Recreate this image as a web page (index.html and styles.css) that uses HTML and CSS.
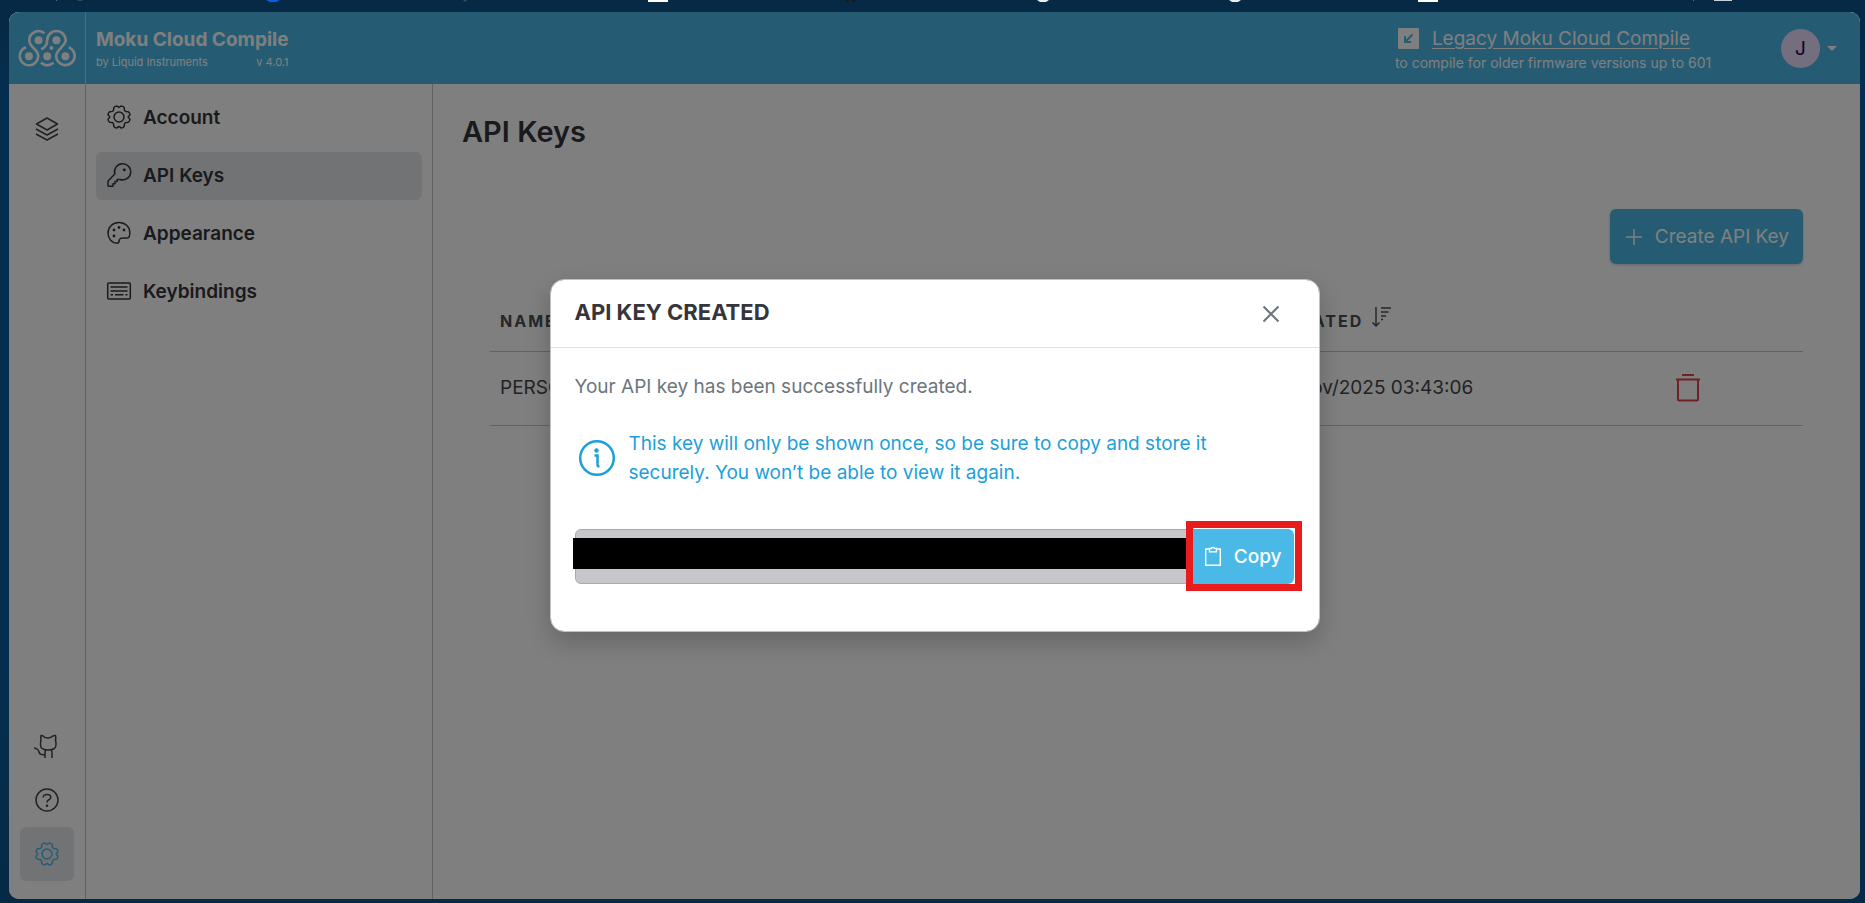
FILE: index.html
```html
<!DOCTYPE html>
<html lang="en">
  <head>
    <meta charset="UTF-8" />
    <meta name="viewport" content="width=device-width, initial-scale=1.0" />
    <title>Moku Cloud Compile</title>
    <link rel="stylesheet" href="styles.css">
  </head>
  <body>
    <!-- Shared icons -->
    <svg class="sprite" aria-hidden="true">
      <symbol id="gear" viewBox="0 0 24 24">
        <path d="M12 2.400 L14 1 Q16.800 1.200 17.200 2.600 L17.400 5 Q17.800 6.200 19 6.500 L21.400 6.800 Q22.900 7.800 23 9.800 L21.400 11.500 Q21 12 21.400 12.500 L23 14.200 Q22.900 16.200 21.400 17.200 L19 17.500 Q17.800 17.800 17.400 19 L17.200 21.400 Q16.200 22.900 14 23 L12.500 21.600 Q12 21.200 11.500 21.600 L10 23 Q7.800 22.900 6.800 21.400 L6.600 19 Q6.200 17.800 5 17.500 L2.600 17.200 Q1.100 16.200 1 14.200 L2.600 12.500 Q3 12 2.600 11.500 L1 9.800 Q1.100 7.800 2.600 6.800 L5 6.500 Q6.200 6.200 6.600 5 L6.800 2.600 Q7.200 1.200 10 1 Z" />
        <circle cx="12" cy="12" r="5" />
      </symbol>
    </svg>

    <svg class="browser-edge" viewBox="0 0 1865 3" preserveAspectRatio="none" aria-hidden="true">
      <rect x="56" width="1" height="1" fill="#5c7081" />
      <path d="M77 0h6l-2 1h-2z" fill="#3f4b52" />
      <path d="M266 0h14l-4 2h-6z" fill="#0a5fe0" />
      <path d="M463 0h4l-2 2z" fill="#3f4b52" />
      <rect x="648" width="20" height="2" fill="#ffffff" />
      <path d="M845 0h4l-1 2h-2zM852 0h4l-1 2h-2z" fill="#1c1a18" />
      <path d="M1037 0h12l-3 2h-6zM1229 0h12l-3 2h-6z" fill="#e8eef2" />
      <rect x="1418" width="20" height="2" fill="#ffffff" />
      <rect x="1693" width="1" height="1" fill="#5c7081" />
      <rect x="1714" width="18" height="1" fill="#c4d0d3" />
    </svg>

    <div class="app">
      <header class="topbar">
        <a class="logo" href="#" aria-label="Home">
          <svg viewBox="52 88 178 116" fill="none" stroke="currentColor" stroke-width="8">
            <path d="M132 101 A28 28 0 0 0 86 122 C86 145 113 147 113 170 A28 28 0 1 1 76 143" />
            <path d="M122 149 C134 144 140 136 140 122 A28 28 0 0 1 196 122 C196 138 167 150 167 170 A28 28 0 1 0 205 143" />
            <path d="M121 190 Q140 205 159 190" />
            <g fill="currentColor" stroke="none">
              <circle cx="114" cy="122" r="12" />
              <circle cx="168" cy="122" r="12" />
              <circle cx="85" cy="170" r="12" />
              <circle cx="140" cy="170" r="12" />
              <circle cx="195" cy="170" r="12" />
              <circle cx="153" cy="145" r="6" />
            </g>
          </svg>
        </a>
        <div class="brand">
          <div class="brand-name">Moku Cloud Compile</div>
          <div class="brand-sub">
            <span>by Liquid Instruments</span>
            <span>v 4.0.1</span>
          </div>
        </div>
        <div class="legacy">
          <div class="legacy-row">
            <svg class="legacy-icon" viewBox="0 0 21 21">
              <rect width="21" height="21" rx="1" fill="currentColor" />
              <path d="M14.500 6.500 L7 14 M7 8 V14 H13" fill="none" stroke="#4ab9e7" stroke-width="2" />
            </svg>
            <a href="#">Legacy Moku Cloud Compile</a>
          </div>
          <div class="legacy-note">to compile for older firmware versions up to 601</div>
        </div>
        <button class="user" aria-label="User menu">
          <span class="avatar">J</span>
          <span class="caret"></span>
        </button>
      </header>

      <div class="columns">
        <nav class="rail">
          <a class="rail-item" href="#" aria-label="Projects">
            <svg class="icon" viewBox="0 0 24 24">
              <path d="M12 1 L22.500 7 L12 13 L1.500 7 Z" />
              <path d="M1 12 L12 18 L23 12" />
              <path d="M1 17 L12 23 L23 17" />
            </svg>
          </a>
          <a class="rail-item rail-push" href="#" aria-label="GitHub">
            <svg class="icon" viewBox="1 0 24 24">
              <path d="M7 1.500 Q8.500 1 11 3.500 Q14 4.300 16.500 3.500 Q19.500 1 21.500 1.500 Q22 3.500 21.500 6 Q23 12 20.500 14.500 Q18 16 14 16 Q9.500 16 7.500 14 Q5.800 11.500 7 6 Q6.500 3.500 7 1.500 Z" />
              <path d="M11 24 V18.500 Q11 17 12 16 M18 24 V18.500 Q18 17 17 16 M11 20.500 Q6 21.500 5 18 Q4 14.500 0 14" />
            </svg>
          </a>
          <a class="rail-item" href="#" aria-label="Help">
            <svg class="icon" viewBox="0 0 24 24">
              <circle cx="12" cy="12" r="11" />
              <path d="M8.200 9.500 Q8.200 6.400 12 6.400 Q15.800 6.400 15.800 9.300 Q15.800 11 13.500 12 Q12 12.800 12 14.500" />
              <circle class="dot" cx="12" cy="17.700" r="1.300" />
            </svg>
          </a>
          <a class="rail-item active" href="#" aria-label="Settings">
            <svg class="icon"><use href="#gear" /></svg>
          </a>
        </nav>

        <nav class="sidebar">
          <a class="side-item" href="#">
            <svg class="icon"><use href="#gear" /></svg>
            Account
          </a>
          <a class="side-item active" href="#">
            <svg class="icon" viewBox="0 0 24 24">
              <path d="M7.800 11 A8.100 8.100 0 1 1 13 16.500 L10.200 16.500 V18.500 H8 V20.800 H6 V23.200 H1.500 Q1 23.200 1 22.500 V19 Q1 18 1.800 17.200 Z" />
              <circle class="dot" cx="17.300" cy="6.800" r="1.500" />
            </svg>
            API Keys
          </a>
          <a class="side-item" href="#">
            <svg class="icon" viewBox="0 0 24 24">
              <path d="M22.800 11.500 C22.800 5.500 18 1.500 12 1.500 C5.800 1.500 1 6 1 12 C1 18 5.500 22.300 10 22.300 C12.500 22.300 12 20 12.500 18.500 C13 17.200 14.500 17 16 17 H20.500 C22.500 17 22.800 14 22.800 11.500 Z" />
              <circle class="dot" cx="7" cy="9" r="1.400" />
              <circle class="dot" cx="12" cy="6.500" r="1.400" />
              <circle class="dot" cx="17" cy="9" r="1.400" />
              <circle class="dot" cx="7" cy="15" r="1.400" />
            </svg>
            Appearance
          </a>
          <a class="side-item" href="#">
            <svg class="icon" viewBox="0 0 24 24">
              <rect x="0.700" y="4" width="22.600" height="16" rx="1" />
              <path d="M3.500 8 H20.500 M3.500 12 H20.500 M3.500 15.700 H6 M8 15.700 H16.500 M18.500 15.700 H20.500" />
            </svg>
            Keybindings
          </a>
        </nav>

        <main class="content">
          <h1>API Keys</h1>
          <div class="keys">
            <button class="btn create">
              <svg class="plus" viewBox="0 0 16 16"><path d="M8 0 V16 M0 8 H16" /></svg>
              Create API Key
            </button>
            <table>
              <thead>
                <tr>
                  <th class="col-name">Name</th>
                  <th class="col-created">
                    Created
                    <svg class="sort" viewBox="0 0 20 20">
                      <path d="M4 0 V19 M0.500 15.500 L4 19 L7.500 15.500 M9 1 H19 M9 5 H16.500 M9 9 H14 M9 12.500 H11" />
                    </svg>
                  </th>
                  <th class="col-delete"></th>
                </tr>
              </thead>
              <tbody>
                <tr>
                  <td>PERSONAL</td>
                  <td>11/Nov/2025 03:43:06</td>
                  <td>
                    <button class="delete" aria-label="Delete key">
                      <svg viewBox="0 0 24 28"><path d="M6 1 H18 M0 5.500 H24 M2 5.500 V25 Q2 26.500 3.500 26.500 H20.500 Q22 26.500 22 25 V5.500" /></svg>
                    </button>
                  </td>
                </tr>
              </tbody>
            </table>
          </div>
        </main>
      </div>

      <div class="overlay">
        <section class="modal" role="dialog" aria-labelledby="modal-title">
          <header class="modal-header">
            <h2 id="modal-title">API KEY CREATED</h2>
            <button class="close" aria-label="Close">
              <svg viewBox="0 0 16 16"><path d="M0.500 0.500 L15.500 15.500 M15.500 0.500 L0.500 15.500" /></svg>
            </button>
          </header>
          <div class="modal-body">
            <p>Your API key has been successfully created.</p>
            <div class="info">
              <svg class="info-icon" viewBox="0 0 36 36">
                <circle cx="18" cy="18" r="16.800" />
                <path d="M15.500 15.500 H18.500 V24.500 Q18.500 26.500 20.500 26.500" />
                <circle class="dot" cx="17.500" cy="10.500" r="2.200" />
              </svg>
              <p>This key will only be shown once, so be sure to copy and store it securely. You won’t be able to view it again.</p>
            </div>
            <div class="key-field">
              <input type="text" aria-label="API key" readonly />
              <span class="redacted"></span>
              <button class="btn copy">
                <svg class="clipboard" viewBox="0 0 16 19">
                  <path d="M4.500 2 H0.700 V18.300 H15.300 V2 H11.500" />
                  <path d="M4.500 1.500 H6 Q8 -0.300 10 1.500 H11.500 V4.800 H4.500 Z" />
                </svg>
                Copy
                <span class="highlight"></span>
              </button>
            </div>
          </div>
        </section>
      </div>
    </div>
  </body>
</html>
```

FILE: styles.css
```css
* {
  box-sizing: border-box;
}

body {
  margin: 0;
  padding: 12px 5px 4px 9px;
  height: 100vh;
  font-family: Inter, "Liberation Sans", sans-serif;
  font-size: 19px;
  line-height: 29px;
  color: #343a40;
  background: linear-gradient(#062a45 0, #062a45 30px, #042e50 90px, #042e50 70%, #062a45);
}

h1,
h2,
p {
  margin: 0;
}

button {
  font: inherit;
  color: inherit;
  border: 0;
  padding: 0;
  background: none;
  cursor: pointer;
}

svg {
  flex: none;
  overflow: visible;
}

.sprite {
  position: absolute;
  width: 0;
  height: 0;
}

.browser-edge {
  position: absolute;
  top: 0;
  left: 0;
  width: 100%;
  height: 3px;
}

.app {
  position: relative;
  display: flex;
  flex-direction: column;
  height: 100%;
  border-radius: 10px;
  overflow: hidden;
  background: #ffffff;
}

/* Top bar */
.topbar {
  display: flex;
  align-items: stretch;
  height: 72px;
  color: #ffffff;
  background: #4ab9e7;
}

.logo {
  display: flex;
  align-items: center;
  justify-content: center;
  width: 77px;
  color: inherit;
  border-right: 1px solid #c8cdd0;
}

.logo svg {
  width: 59px;
}

.brand {
  padding: 13px 10px;
}

.brand-name {
  font-weight: 700;
  line-height: 29px;
}

.brand-sub {
  display: flex;
  justify-content: space-between;
  font-size: 11px;
  line-height: 16px;
}

.legacy {
  margin-left: auto;
  padding-top: 12px;
}

.legacy-row {
  display: flex;
  align-items: center;
  gap: 13px;
  padding: 0 24px 0 3px;
}

.legacy-row a {
  color: inherit;
  text-underline-offset: 3px;
}

.legacy-icon {
  width: 21px;
  height: 21px;
}

.legacy-note {
  font-size: 14px;
  line-height: 20px;
}

.user {
  display: flex;
  align-items: center;
  gap: 7px;
  margin: 0 23px 0 67px;
}

.avatar {
  width: 39px;
  line-height: 39px;
  border-radius: 50%;
  color: #22005d;
  background: #eaddff;
}

.caret {
  border: 5px solid transparent;
  border-top-color: #ffffff;
  border-bottom: 0;
}

/* Columns */
.columns {
  display: flex;
  flex: 1;
}

.icon {
  width: 24px;
  height: 24px;
  fill: none;
  stroke: currentColor;
  stroke-width: 1.5px;
  stroke-linejoin: round;
}

.dot {
  fill: currentColor;
  stroke: none;
}

.rail {
  display: flex;
  flex-direction: column;
  align-items: center;
  width: 77px;
  padding: 18px 0;
  border-right: 1px solid #c4c4c8;
}

.rail-item {
  display: flex;
  align-items: center;
  justify-content: center;
  width: 54px;
  height: 54px;
  border-radius: 6px;
  color: #45454b;
}

.rail-push {
  margin-top: auto;
}

.rail-item.active {
  color: #4ab9e7;
  background: #e5e7ea;
}

.sidebar {
  display: flex;
  flex-direction: column;
  gap: 10px;
  width: 347px;
  padding: 10px;
  border-right: 1px solid #c4c4c8;
}

.side-item {
  display: flex;
  align-items: center;
  gap: 12px;
  height: 48px;
  padding: 0 11px 2px;
  border-radius: 6px;
  font-weight: 600;
  color: #35353b;
  text-decoration: none;
}

.side-item.active {
  background: #e5e7ea;
}

/* Content */
.content {
  flex: 1;
  padding: 28px 57px 28px 29px;
}

h1 {
  font-size: 29px;
  line-height: 40px;
  font-weight: 600;
  color: #35353b;
}

.keys {
  display: flex;
  flex-direction: column;
  padding: 57px 0 0 28px;
}

.btn {
  display: flex;
  align-items: center;
  gap: 13px;
  height: 55px;
  padding: 0 12px;
  border-radius: 6px;
  color: #ffffff;
  background: #4ab9e7;
}

.create {
  align-self: flex-end;
  padding: 0 14px 0 16px;
  box-shadow: 0 1px 3px rgba(0, 0, 0, 0.2);
}

.plus {
  width: 16px;
  stroke: currentColor;
  stroke-width: 1.5px;
}

table {
  width: 100%;
  margin-top: 29px;
  border-collapse: collapse;
  table-layout: fixed;
}

th,
td {
  padding: 0 10px;
  text-align: left;
  border-bottom: 1px solid #c4c4c8;
}

th {
  height: 58px;
  font-size: 16px;
  font-weight: 700;
  letter-spacing: 2px;
  text-transform: uppercase;
  color: #4a4f55;
}

td {
  height: 74px;
  padding-bottom: 1px;
  color: #45454b;
}

.col-name {
  width: 59%;
}

.col-created {
  width: 30%;
}

.sort {
  width: 20px;
  height: 20px;
  margin-left: 3px;
  fill: none;
  stroke: currentColor;
  stroke-width: 1.5px;
}

.delete {
  display: flex;
  margin-left: 7px;
}

.delete svg {
  width: 24px;
  height: 28px;
  fill: none;
  stroke: #e5404a;
  stroke-width: 2px;
}

/* Dialog */
.overlay {
  position: absolute;
  inset: 0;
  display: flex;
  align-items: center;
  justify-content: center;
  background: rgba(0, 0, 0, 0.5);
}

.modal {
  width: 770px;
  border: 1px solid #c0c0c0;
  border-radius: 14px;
  background: #ffffff;
  background-clip: padding-box;
  box-shadow: 0 10px 24px rgba(0, 0, 0, 0.2);
}

.modal-header {
  display: flex;
  align-items: center;
  justify-content: space-between;
  height: 68px;
  padding: 0 40px 0 24px;
  border-bottom: 1px solid #e0e0e2;
}

h2 {
  padding-bottom: 3px;
  font-size: 22px;
  line-height: 32px;
  font-weight: 700;
  color: #35353b;
}

.close svg {
  display: block;
  width: 16px;
  fill: none;
  stroke: #6c757d;
  stroke-width: 2px;
}

.modal-body {
  padding: 24px 25px 47px 24px;
  color: #6c757d;
}

.info {
  display: flex;
  align-items: center;
  gap: 14px;
  margin: 28px 0 42px;
  padding: 0 40px 0 4px;
  color: #1c9fda;
}

.info-icon {
  width: 36px;
  height: 36px;
  fill: none;
  stroke: currentColor;
  stroke-width: 2.5px;
}

.key-field {
  position: relative;
  display: flex;
}

.key-field input {
  flex: 1;
  min-width: 0;
  height: 55px;
  padding: 0 12px;
  font: inherit;
  border: 1px solid #a9a9b0;
  border-radius: 6px 0 0 6px;
  background: #c6c6cb;
}

.redacted {
  position: absolute;
  top: 9px;
  left: -2px;
  right: 105px;
  height: 31px;
  background: #000000;
}

.copy {
  position: relative;
  border-radius: 0 6px 6px 0;
  font-weight: 500;
}

.clipboard {
  width: 16px;
  height: 19px;
  fill: none;
  stroke: currentColor;
  stroke-width: 1.4px;
}

.highlight {
  position: absolute;
  inset: -8px -8px -7px -7px;
  border: 7px solid #e81c1c;
}
```
